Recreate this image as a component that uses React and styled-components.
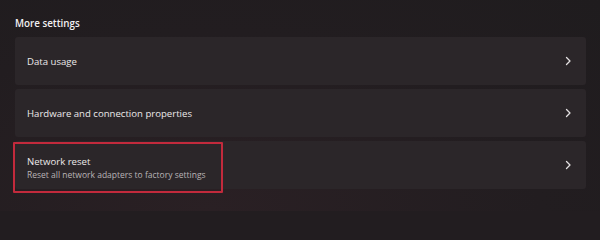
import React from 'react';
import styled, { createGlobalStyle } from 'styled-components';

const GlobalStyle = createGlobalStyle`
    html, body {
        margin: 0;
        padding: 0;
        background: #221d20;
    }
    body {
        font-family: "Open Sans", "Noto Sans", sans-serif;
        -webkit-font-smoothing: antialiased;
    }
`;

const Page = styled.div`
    width: 600px;
    height: 211px;
    box-sizing: border-box;
    padding: 16px 14px 0 15px;
    background: radial-gradient(ellipse at 35% 100%, #2a2024 0%, #221d20 60%, #1f1c1e 100%);
    overflow: hidden;
`;

const Title = styled.div`
    color: #f2f0f1;
    font-size: 9.8px;
    font-weight: 600;
    line-height: 15px;
    margin-bottom: 6px;
`;

const List = styled.div`
    display: flex;
    flex-direction: column;
    gap: 4px;
`;

const Card = styled.div`
    position: relative;
    height: 48px;
    box-sizing: border-box;
    display: flex;
    align-items: center;
    justify-content: space-between;
    padding: 0 14px 0 12px;
    background: #2b2629;
    border-radius: 3px;
`;

const Texts = styled.div`
    display: flex;
    flex-direction: column;
    gap: 0;
    padding-top: ${({ $twoLine }) => ($twoLine ? '5px' : '1px')};
`;

const Label = styled.div`
    color: #ece9ea;
    font-size: 9.6px;
    line-height: 14px;
`;

const Sub = styled.div`
    color: #b9b4b6;
    font-size: 8.5px;
    line-height: 12px;
`;

const Highlight = styled.div`
    position: absolute;
    left: -2px;
    top: 1px;
    width: 210px;
    height: 51px;
    box-sizing: border-box;
    border: 2px solid #c22a3c;
    border-radius: 1px;
    pointer-events: none;
`;

const Chevron = () => (
    <svg width="8" height="10" viewBox="0 0 8 10">
        <path d="M2.5 1.5 L6 5 L2.5 8.5" fill="none" stroke="#e4e1e2" strokeWidth="1.3" strokeLinecap="round" strokeLinejoin="round" />
    </svg>
);

const items = [
    { label: 'Data usage' },
    { label: 'Hardware and connection properties' },
    { label: 'Network reset', sub: 'Reset all network adapters to factory settings', marked: true },
];

const App = () => (
    <>
        <GlobalStyle />
        <Page>
            <Title>More settings</Title>
            <List>
                {items.map((item) => (
                    <Card key={item.label}>
                        <Texts $twoLine={!!item.sub}>
                            <Label>{item.label}</Label>
                            {item.sub && <Sub>{item.sub}</Sub>}
                        </Texts>
                        <Chevron />
                        {item.marked && <Highlight />}
                    </Card>
                ))}
            </List>
        </Page>
    </>
);

export default App;
